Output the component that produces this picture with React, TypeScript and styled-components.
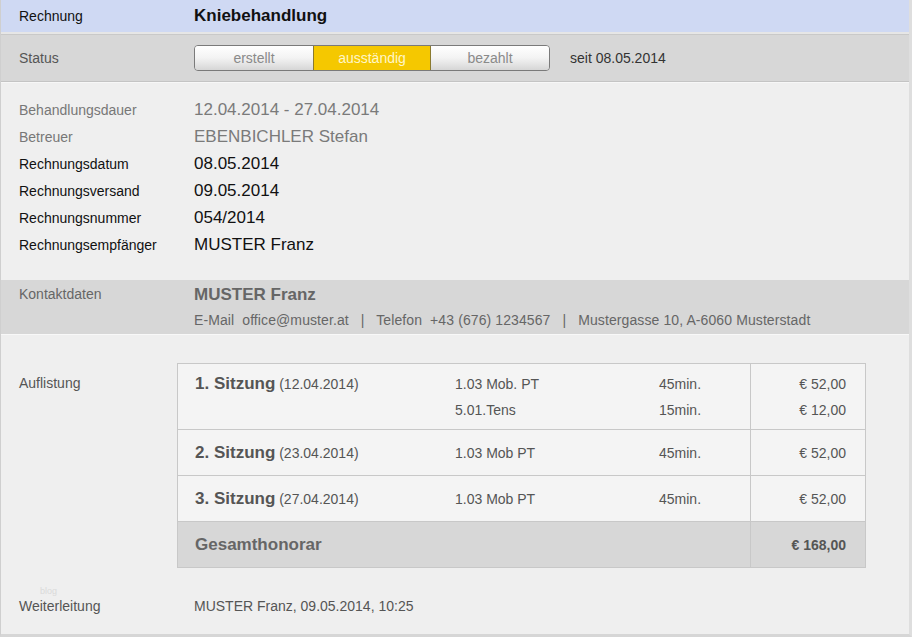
import styled, { createGlobalStyle } from "styled-components";

const GlobalStyle = createGlobalStyle`
  html, body {
    margin: 0;
    padding: 0;
    background: #efefef;
  }
  body {
    font-family: "Liberation Sans", Arial, sans-serif;
  }
`;

const Page = styled.div`
  position: relative;
  width: 912px;
  height: 637px;
  box-sizing: border-box;
  background: #efefef;
  border-left: 1px solid #cfcfcf;
  border-right: 3px solid #dedede;
  border-bottom: 3px solid #d6d6d6;
  overflow: hidden;
`;

const HeaderBar = styled.div`
  display: flex;
  align-items: center;
  height: 32px;
  background: #cfd9f3;
  border-bottom: 2px solid #e6e6e6;
  box-shadow: 0 1px 0 #c9c9c9;
`;

const Label = styled.div<{ tone?: "dark" | "mid" | "light" }>`
  width: 175px;
  flex: none;
  padding-left: 18px;
  font-size: 14px;
  color: ${p => (p.tone === "dark" ? "#111" : p.tone === "light" ? "#777" : "#555")};
`;

const Title = styled.div`
  font-size: 17px;
  font-weight: bold;
  color: #111;
`;

const StatusBar = styled.div`
  display: flex;
  align-items: center;
  height: 46px;
  margin-top: 1px;
  background: #d7d7d7;
  border-bottom: 1px solid #c4c4c4;
`;

const Segmented = styled.div`
  display: flex;
  height: 26px;
  margin-top: -1px;
  border: 1px solid #7a7a7a;
  border-radius: 4px;
  overflow: hidden;
  box-sizing: border-box;
`;

const Segment = styled.div<{ active?: boolean }>`
  width: 118px;
  display: flex;
  align-items: center;
  justify-content: center;
  font-size: 14px;
  box-sizing: border-box;
  color: ${p => (p.active ? "#fff6c8" : "#8a8a8a")};
  background: ${p =>
    p.active ? "#f5c800" : "linear-gradient(#ffffff 0%, #f3f3f3 50%, #d6d6d6 100%)"};
  border-left: ${p => (p.active ? "1px solid #8a7a30" : "none")};
  border-right: ${p => (p.active ? "1px solid #8a7a30" : "none")};
`;

const Since = styled.div`
  margin-left: 20px;
  font-size: 14px;
  color: #333;
`;

const InfoSection = styled.div`
  padding: 13px 0 22px;
  border-top: 1px solid #f7f7f7;
`;

const InfoRow = styled.div`
  display: flex;
  align-items: center;
  height: 27px;
`;

const Value = styled.div<{ light?: boolean }>`
  font-size: 17px;
  color: ${p => (p.light ? "#7a7a7a" : "#111")};
`;

const ContactBar = styled.div`
  display: flex;
  align-items: flex-start;
  height: 55px;
  padding-top: 5px;
  box-sizing: border-box;
  background: #d7d7d7;
  border-bottom: 1px solid #f8f8f8;
`;

const ContactLabel = styled(Label)`
  padding-top: 1px;
  color: #666;
`;

const ContactBody = styled.div`
  display: flex;
  flex-direction: column;
  gap: 7px;
  color: #666;
`;

const ContactName = styled.div`
  font-size: 17px;
  font-weight: bold;
`;

const ContactLine = styled.div`
  font-size: 14px;
  letter-spacing: 0.1px;
  white-space: pre;
`;

const ListSection = styled.div`
  display: flex;
  align-items: flex-start;
  padding-top: 28px;
`;

const ListLabel = styled(Label)`
  width: 158px;
  padding-top: 12px;
`;

const Table = styled.div`
  width: 689px;
  border: 1px solid #c8c8c8;
  background: #f4f4f4;
  box-sizing: border-box;
`;

const TableRow = styled.div<{ total?: boolean }>`
  display: grid;
  grid-template-columns: 277px 204px 91px 1fr;
  background: ${p => (p.total ? "#d7d7d7" : "transparent")};
  & + & {
    border-top: 1px solid #c8c8c8;
  }
`;

const Cell = styled.div<{ pad: number }>`
  display: flex;
  flex-direction: column;
  justify-content: center;
  padding: ${p => p.pad}px 0 ${p => p.pad - 1}px;
  min-height: 26px;
`;

const SessionCell = styled(Cell)`
  padding-left: 17px;
  justify-content: flex-start;
`;

const Line = styled.div`
  height: 26px;
  line-height: 26px;
  font-size: 14px;
  color: #555;
  white-space: nowrap;
`;

const SessionName = styled.span`
  font-size: 17px;
  font-weight: bold;
  color: #555;
`;

const TotalName = styled.span`
  font-size: 17px;
  font-weight: bold;
  color: #666;
`;

const PriceCell = styled(Cell)`
  align-items: flex-end;
  padding-right: 19px;
  border-left: 1px solid #c8c8c8;
`;

const TotalPrice = styled.span`
  font-weight: bold;
  color: #555;
`;

const ForwardRow = styled.div`
  position: relative;
  display: flex;
  align-items: center;
  height: 27px;
  margin-top: 24px;
`;

const ForwardValue = styled.div`
  font-size: 14px;
  color: #555;
`;

const Ghost = styled.span`
  position: absolute;
  left: 39px;
  top: -6px;
  font-size: 9px;
  color: #dadada;
`;

type Item = { code: string; dur: string; price: string };
type Session = { no: number; date: string; items: Item[] };

const sessions: Session[] = [
  {
    no: 1,
    date: "12.04.2014",
    items: [
      { code: "1.03 Mob. PT", dur: "45min.", price: "€ 52,00" },
      { code: "5.01.Tens", dur: "15min.", price: "€ 12,00" },
    ],
  },
  { no: 2, date: "23.04.2014", items: [{ code: "1.03 Mob PT", dur: "45min.", price: "€ 52,00" }] },
  { no: 3, date: "27.04.2014", items: [{ code: "1.03 Mob PT", dur: "45min.", price: "€ 52,00" }] },
];

const info: { label: string; value: string; light?: boolean }[] = [
  { label: "Behandlungsdauer", value: "12.04.2014 - 27.04.2014", light: true },
  { label: "Betreuer", value: "EBENBICHLER Stefan", light: true },
  { label: "Rechnungsdatum", value: "08.05.2014" },
  { label: "Rechnungsversand", value: "09.05.2014" },
  { label: "Rechnungsnummer", value: "054/2014" },
  { label: "Rechnungsempfänger", value: "MUSTER Franz" },
];

const App = () => {
  return (
    <>
      <GlobalStyle />
      <Page>
        <HeaderBar>
          <Label tone="dark">Rechnung</Label>
          <Title>Kniebehandlung</Title>
        </HeaderBar>

        <StatusBar>
          <Label>Status</Label>
          <Segmented>
            <Segment>erstellt</Segment>
            <Segment active>ausständig</Segment>
            <Segment>bezahlt</Segment>
          </Segmented>
          <Since>seit 08.05.2014</Since>
        </StatusBar>

        <InfoSection>
          {info.map(({ label, value, light }) => (
            <InfoRow key={label}>
              <Label tone={light ? "light" : "dark"}>{label}</Label>
              <Value light={light}>{value}</Value>
            </InfoRow>
          ))}
        </InfoSection>

        <ContactBar>
          <ContactLabel>Kontaktdaten</ContactLabel>
          <ContactBody>
            <ContactName>MUSTER Franz</ContactName>
            <ContactLine>
              {"E-Mail  office@muster.at   |   Telefon  +43 (676) 1234567   |   Mustergasse 10, A-6060 Musterstadt"}
            </ContactLine>
          </ContactBody>
        </ContactBar>

        <ListSection>
          <ListLabel>Auflistung</ListLabel>
          <Table>
            {sessions.map(s => {
              const pad = s.items.length > 1 ? 7 : 10;
              return (
                <TableRow key={s.no}>
                  <SessionCell pad={pad}>
                    <Line>
                      <SessionName>{s.no}. Sitzung</SessionName> ({s.date})
                    </Line>
                  </SessionCell>
                  <Cell pad={pad}>
                    {s.items.map(i => (
                      <Line key={i.code}>{i.code}</Line>
                    ))}
                  </Cell>
                  <Cell pad={pad}>
                    {s.items.map(i => (
                      <Line key={i.code}>{i.dur}</Line>
                    ))}
                  </Cell>
                  <PriceCell pad={pad}>
                    {s.items.map(i => (
                      <Line key={i.code}>{i.price}</Line>
                    ))}
                  </PriceCell>
                </TableRow>
              );
            })}
            <TableRow total>
              <SessionCell pad={10}>
                <Line>
                  <TotalName>Gesamthonorar</TotalName>
                </Line>
              </SessionCell>
              <Cell pad={10} />
              <Cell pad={10} />
              <PriceCell pad={10}>
                <Line>
                  <TotalPrice>€ 168,00</TotalPrice>
                </Line>
              </PriceCell>
            </TableRow>
          </Table>
        </ListSection>

        <ForwardRow>
          <Ghost>blog</Ghost>
          <Label>Weiterleitung</Label>
          <ForwardValue>MUSTER Franz, 09.05.2014, 10:25</ForwardValue>
        </ForwardRow>
      </Page>
    </>
  );
};

export default App;
